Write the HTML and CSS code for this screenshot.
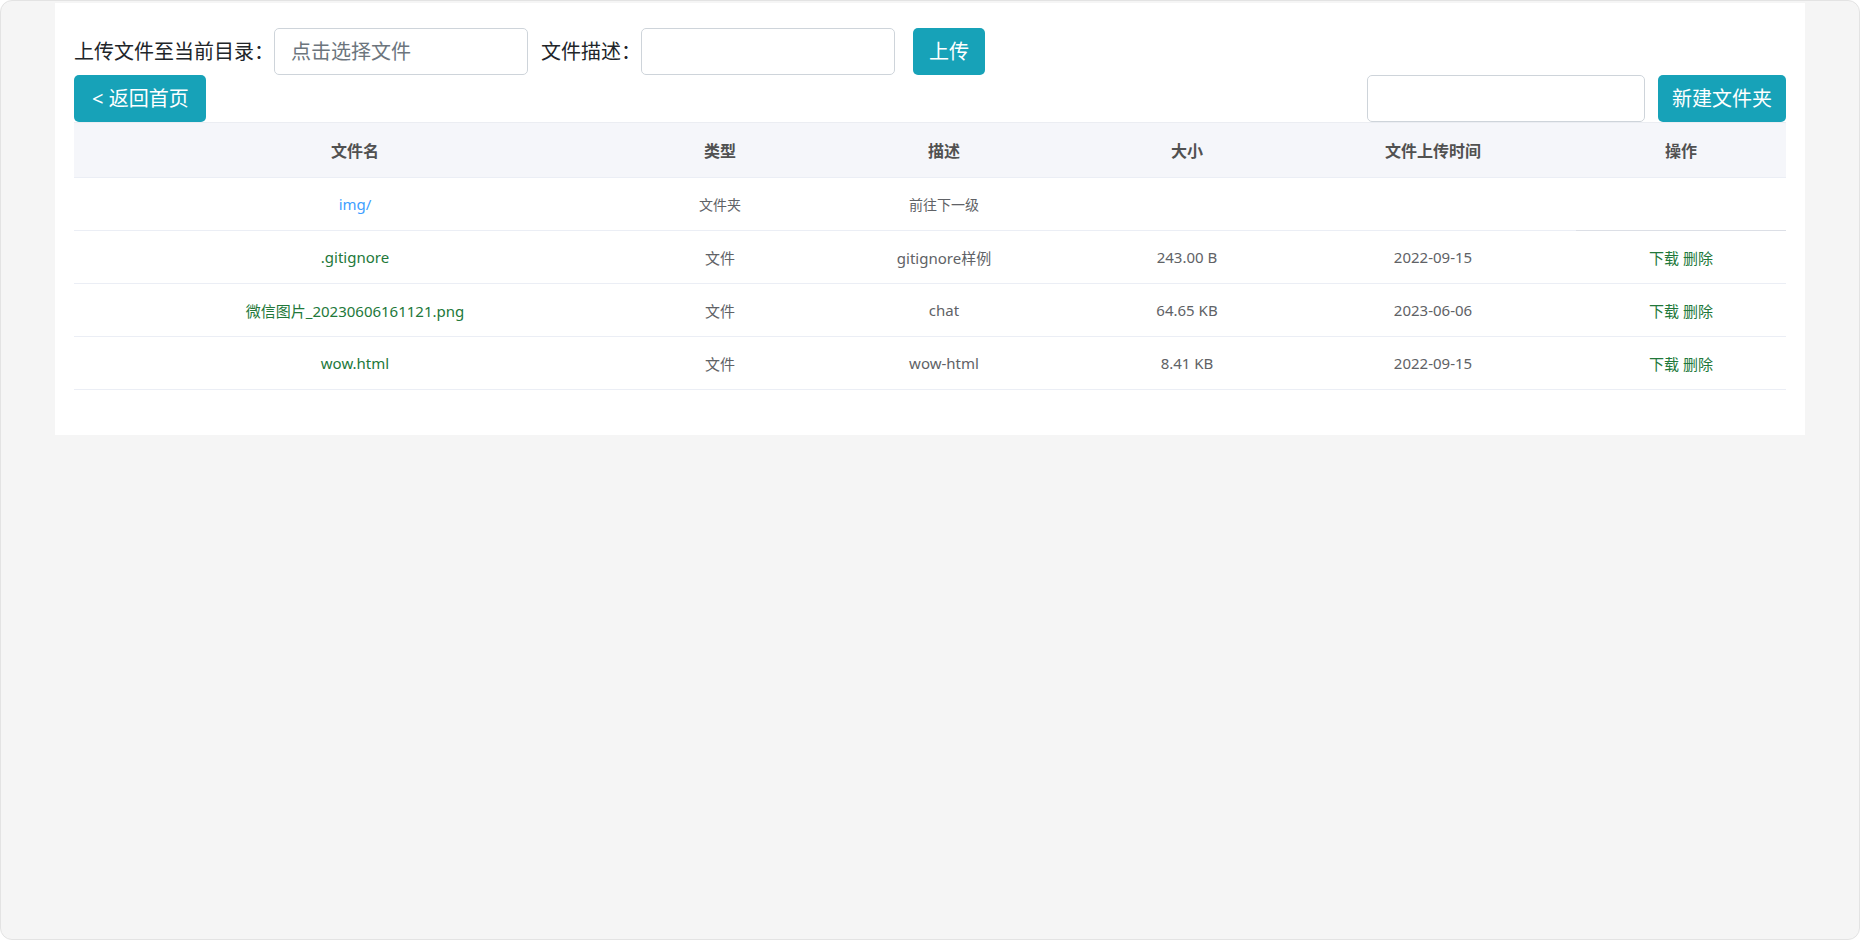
FILE: index.html
```html
<!DOCTYPE html>
<html lang="zh-CN">
<head>
<meta charset="utf-8">
<title>文件管理</title>
<link rel="stylesheet" href="styles.css">
</head>
<body>
<div class="frame">
  <div class="panel">
    <div class="upload-row">
      <label class="label">上传文件至当前目录：</label>
      <div class="input placeholder">点击选择文件</div>
      <label class="label label-desc">文件描述：</label>
      <div class="input"></div>
      <button class="btn btn-upload">上传</button>
    </div>
    <div class="action-row">
      <button class="btn btn-back">&lt; 返回首页</button>
      <div class="new-folder">
        <div class="input input-folder"></div>
        <button class="btn btn-new">新建文件夹</button>
      </div>
    </div>
    <table class="files">
      <colgroup>
        <col class="c1"><col class="c2"><col class="c3"><col class="c4"><col class="c5"><col class="c6">
      </colgroup>
      <thead>
        <tr><th>文件名</th><th>类型</th><th>描述</th><th>大小</th><th>文件上传时间</th><th>操作</th></tr>
      </thead>
      <tbody>
        <tr class="folder-row">
          <td><span class="link-blue">img/</span></td>
          <td>文件夹</td>
          <td>前往下一级</td>
          <td></td>
          <td></td>
          <td class="ops-empty"></td>
        </tr>
        <tr>
          <td><span class="link-green">.gitignore</span></td>
          <td>文件</td>
          <td>gitignore样例</td>
          <td>243.00 B</td>
          <td>2022-09-15</td>
          <td><span class="link-green">下载</span> <span class="link-green">删除</span></td>
        </tr>
        <tr>
          <td><span class="link-green">微信图片_20230606161121.png</span></td>
          <td>文件</td>
          <td>chat</td>
          <td>64.65 KB</td>
          <td>2023-06-06</td>
          <td><span class="link-green">下载</span> <span class="link-green">删除</span></td>
        </tr>
        <tr>
          <td><span class="link-green">wow.html</span></td>
          <td>文件</td>
          <td>wow-html</td>
          <td>8.41 KB</td>
          <td>2022-09-15</td>
          <td><span class="link-green">下载</span> <span class="link-green">删除</span></td>
        </tr>
      </tbody>
    </table>
  </div>
</div>
</body>
</html>
```

FILE: styles.css
```css
* { box-sizing: border-box; }

html, body {
  margin: 0;
  padding: 0;
  background: #ffffff;
}

body {
  font-family: "Noto Sans", "Noto Sans CJK SC", sans-serif;
  color: #212529;
}

.frame {
  width: 1860px;
  height: 940px;
  background: #f5f5f5;
  border: 1px solid #e3e3e3;
  border-radius: 12px;
  padding-top: 2px;
  overflow: hidden;
}

.panel {
  width: 1750px;
  margin: 0 auto;
  background: #ffffff;
  padding: 25px 19px 45px 19px;
}

.upload-row {
  display: flex;
  align-items: center;
  height: 47px;
}

.label {
  font-size: 20px;
  line-height: 30px;
  color: #212529;
  white-space: nowrap;
}

.label-desc {
  margin-left: 13px;
}

.input {
  width: 254px;
  height: 47px;
  border: 1px solid #ced4da;
  border-radius: 5px;
  background: #fff;
  padding: 0 16px;
  font-size: 20px;
  line-height: 45px;
}

.placeholder {
  color: #6c757d;
}

.btn {
  height: 47px;
  padding: 0 15px;
  border: none;
  border-radius: 5px;
  background: #17a2b8;
  color: #fff;
  font-family: inherit;
  font-size: 20px;
  line-height: 47px;
  cursor: pointer;
}

.btn-upload {
  margin-left: 18px;
  padding: 0 16px;
}

.btn-back {
  padding: 0 17px 0 18px;
}

.btn-new {
  padding: 0 14px;
}

.action-row {
  display: flex;
  justify-content: space-between;
  align-items: center;
  height: 47px;
}

.new-folder {
  display: flex;
  align-items: center;
  gap: 13px;
}

.input-folder {
  width: 278px;
}

.files {
  width: 1712px;
  border-collapse: collapse;
  table-layout: fixed;
}

.c1 { width: 562px; }
.c2 { width: 168px; }
.c3 { width: 280px; }
.c4 { width: 206px; }
.c5 { width: 286px; }
.c6 { width: 210px; }

.files th {
  height: 55px;
  background: #f5f6fa;
  color: #515151;
  font-size: 16px;
  font-weight: 700;
  text-align: center;
  border-top: 1px solid #ebedf2;
  border-bottom: 1px solid #ebeef5;
  padding: 0;
}

.files td {
  height: 53px;
  padding: 0;
  text-align: center;
  font-size: 15px;
  color: #606266;
  border-bottom: 1px solid #ebeef5;
}

.folder-row td {
  font-size: 14px;
}

.folder-row td.ops-empty {
  border-bottom: 1px solid #dcdfe6;
}

.link-blue {
  color: #409eff;
  font-size: 15px;
}

.link-green {
  color: #22783a;
}
```
